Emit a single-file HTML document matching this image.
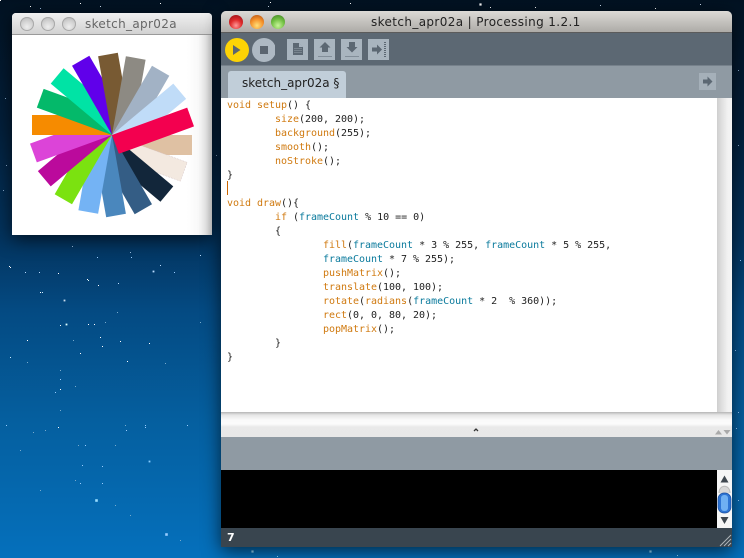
<!DOCTYPE html>
<html>
<head>
<meta charset="utf-8">
<style>
html,body{margin:0;padding:0;width:744px;height:558px;overflow:hidden}
body{position:relative;background:linear-gradient(180deg,#021222 0,#03203c 130px,#03345f 240px,#044a82 310px,#055f9f 420px,#0570bc 558px);font-family:"DejaVu Sans","Liberation Sans",sans-serif}
.a{position:absolute}
.star{position:absolute;left:0;top:0;width:1px;height:1px;background:#fff;box-shadow:
9px 266px #fff,10px 267px #fff,87px 279px #fff,88px 280px #dff,64px 300px 0 .4px #cde,98px 285px #fff,58px 273px #fff,97px 257px #9cf,131px 257px #9cf,174px 272px #9cf,153px 271px 0 .4px #bdf,40px 292px #fff,42px 292px #cef,66px 324px 0 .4px #dff,60px 325px #fff,88px 324px #fff,94px 324px #fff,27px 340px #fff,100px 337px #fff,102px 346px #fff,120px 341px #fff,149px 343px #fff,80px 353px #fff,10px 357px #cef,127px 361px #fff,60px 379px #9cf,60px 389px #fff,55px 392px #9cf,145px 425px #9cf,6px 425px #9cf,58px 427px #fff,145px 427px #9cf,126px 430px #9cf,187px 425px #9cf,85px 445px #9cf,82px 465px #9cf,149px 461px 0 .4px #8cf,96px 500px 0 .8px #9df,166px 534px 0 .8px #9cf,102px 466px #9cf,102px 483px #9cf,80px 483px #9cf,
72px 246px #9bd,130px 252px #9bd,160px 265px #bdf,118px 283px #bdf,174px 272px #bdf,200px 255px #bdf,25px 272px #bdf,39px 272px #bdf,117px 312px #7ac,105px 322px #7ac,73px 340px #7ac,27px 362px #7ac,200px 322px #7ac,165px 363px #7ac,60px 370px #7ac,75px 386px #7ac,60px 410px #7ac,78px 445px #7ac,115px 445px #7ac,125px 425px #7ac,33px 432px #7ac,45px 430px #7ac,20px 450px #7ac,75px 480px #7ac,40px 490px #7ac,115px 505px #7ac,130px 515px #7ac,180px 540px #7ac,
270px 2px #fff,268px 6px #cde,480px 4px 0 .6px #fff,490px 7px #fff,350px 3px #fff,100px 6px #cde,160px 3px #fff,40px 8px #9bd,30px 6px #fff,80px 3px #fff,535px 7px #fff,600px 5px #cde,655px 8px #fff,700px 4px #cde,6px 165px #8ac,5px 98px #8ac,3px 190px #8ac,216px 155px #8ac,738px 70px #8ac,738px 145px #8ac,740px 260px #9cf,738px 412px #9cf,736px 428px #9cf,252px 551px 0 .6px #9df,277px 556px #9df,650px 551px 0 .6px #9df,677px 555px #9df,738px 500px #9cf,735px 350px #9cf;}
.win{box-shadow:0 4px 18px rgba(0,0,0,.65)}
.light{position:absolute;width:14px;height:14px;border-radius:50%}
.g{background:radial-gradient(circle at 50% 70%,#eee 0,#d4d4d4 45%,#b0b0b0 100%);box-shadow:inset 0 0 0 1px #a9a9a9}
.btn{position:absolute;top:39px;width:21px;height:21px;background:#a9b5bf}
#code{position:absolute;left:227px;top:99px;margin:0;font:10px/14px "DejaVu Sans Mono","Liberation Mono",monospace;color:#222;letter-spacing:-.02px;white-space:pre}
#code b{font-weight:normal;color:#d07a10}
#code i{font-style:normal;color:#0a7a9c}
</style>
</head>
<body>
<div class="star"></div>

<!-- sketch window -->
<div class="a win" style="left:12px;top:13px;width:200px;height:222px;background:#fff;border-radius:4px 4px 0 0;overflow:hidden">
  <div class="a" style="left:0;top:0;width:200px;height:21px;background:linear-gradient(#f0f0f0,#d2d2d2);border-bottom:1px solid #9a9a9a"></div>
  <div class="light g" style="left:8px;top:4px"></div>
  <div class="light g" style="left:29px;top:4px"></div>
  <div class="light g" style="left:50px;top:4px"></div>
  <div class="a" style="left:73px;top:3px;font-size:12px;line-height:16px;color:#666;white-space:nowrap;letter-spacing:.33px">sketch_apr02a</div>
  <div class="a" style="left:175px;top:22px;width:25px;height:200px;background:linear-gradient(90deg,rgba(200,200,200,0),rgba(200,200,200,.12) 45%,rgba(190,190,190,.4) 75%,rgba(180,180,180,.75))"></div>
</div>
<svg class="a" style="left:12px;top:35px" width="200" height="200" viewBox="0 0 200 200">
  <g transform="translate(100,100)">
    <rect transform="rotate(0)" width="80" height="20" fill="#dfc1a3"/>
    <rect transform="rotate(20)" width="80" height="20" fill="#f3e9e0" stroke="#d8c8c8" stroke-width=".5" stroke-dasharray="2 1"/>
    <rect transform="rotate(40)" width="80" height="20" fill="#12263a"/>
    <rect transform="rotate(60)" width="80" height="20" fill="#345d85"/>
    <rect transform="rotate(80)" width="80" height="20" fill="#4a87bd"/>
    <rect transform="rotate(100)" width="80" height="20" fill="#74b3f4"/>
    <rect transform="rotate(120)" width="80" height="20" fill="#7be210"/>
    <rect transform="rotate(140)" width="80" height="20" fill="#bb0a9c"/>
    <rect transform="rotate(160)" width="80" height="20" fill="#dc44d8"/>
    <rect transform="rotate(180)" width="80" height="20" fill="#f68b00"/>
    <rect transform="rotate(200)" width="80" height="20" fill="#04b96a"/>
    <rect transform="rotate(220)" width="80" height="20" fill="#00e3a5"/>
    <rect transform="rotate(240)" width="80" height="20" fill="#6000ea"/>
    <rect transform="rotate(260)" width="80" height="20" fill="#785a33"/>
    <rect transform="rotate(280)" width="80" height="20" fill="#8d8a83"/>
    <rect transform="rotate(300)" width="80" height="20" fill="#a2b2c5"/>
    <rect transform="rotate(320)" width="80" height="20" fill="#c0dcf8"/>
    <rect transform="rotate(340)" width="80" height="20" fill="#f3004f"/>
  </g>
</svg>

<!-- main window -->
<div class="a win" style="left:221px;top:11px;width:511px;height:536px;background:#8f9aa3;border-radius:5px 5px 0 0"></div>
<div class="a" style="left:221px;top:11px;width:511px;height:22px;background:linear-gradient(#dcdad6,#adaba7);border-radius:5px 5px 0 0;border-bottom:1px solid #5b5b5b;box-sizing:border-box"></div>
<div class="light" style="left:229px;top:15px;background:radial-gradient(circle at 50% 75%,#ff9a9a 0,#e02b2b 45%,#8e0e14 100%)"></div>
<div class="light" style="left:250px;top:15px;background:radial-gradient(circle at 50% 75%,#ffe07a 0,#f5912a 50%,#ad4c12 100%)"></div>
<div class="light" style="left:271px;top:15px;background:radial-gradient(circle at 50% 75%,#c8f59a 0,#72c043 50%,#3c7d20 100%)"></div>
<div class="a" style="left:371px;top:14px;font-size:12px;line-height:16px;color:#222;white-space:nowrap;letter-spacing:.375px">sketch_apr02a | Processing 1.2.1</div>

<!-- toolbar -->
<div class="a" style="left:221px;top:33px;width:511px;height:32px;background:#5c6873"></div>
<div class="a" style="left:221px;top:65px;width:511px;height:1px;background:#76818b"></div>
<svg class="a" style="left:225px;top:38px" width="50" height="24" viewBox="0 0 50 24">
  <circle cx="12" cy="12" r="12" fill="#fdd305"/>
  <path d="M8 7L15.500 12L8 17Z" fill="#5b6570"/>
  <circle cx="39" cy="12" r="12" fill="#aeb9c3"/>
  <rect x="35" y="8" width="8" height="8" fill="#5b6570"/>
</svg>
<div class="btn" style="left:287px"></div>
<div class="btn" style="left:314px"></div>
<div class="btn" style="left:341px"></div>
<div class="btn" style="left:368px"></div>
<svg class="a" style="left:287px;top:39px" width="102" height="21" viewBox="0 0 102 21">
  <path d="M6 4H12L16 8V16H6Z" fill="#7b8691"/>
  <path d="M6 4H12V8H16V16H6Z" fill="#5c6873"/>
  <path d="M12 4L16 8H12Z" fill="#a9b5bf"/>
  <path d="M7.500 9.500H15M7.500 11.500H15M7.500 13.500H15" stroke="#a9b5bf" stroke-width=".7" stroke-dasharray="1 1"/>
  <path d="M38 3L43.500 8.500H41V13H35V8.500H32.500Z" fill="#5c6873"/>
  <path d="M31.500 17.500H45" stroke="#5c6873" stroke-dasharray="1 1"/>
  <path d="M62 3H68V8H70.500L65 13.500L59.500 8H62Z" fill="#5c6873"/>
  <path d="M58.500 17.500H72" stroke="#5c6873" stroke-dasharray="1 1"/>
  <path d="M85 8.500H90V5.500L95 10.500L90 15.500V12.500H85Z" fill="#5c6873"/>
  <path d="M98 3V18" stroke="#5c6873" stroke-width="2" stroke-dasharray="1 1"/>
</svg>

<!-- tab -->
<div class="a" style="left:228px;top:71px;width:118px;height:27px;background:#c1ced9;border-radius:3px 3px 0 0"></div>
<div class="a" style="left:242px;top:75px;font-size:12px;line-height:16px;color:#222;white-space:nowrap">sketch_apr02a §</div>
<div class="a" style="left:699px;top:73px;width:17px;height:17px;background:#a5b0b9"></div>
<svg class="a" style="left:699px;top:73px" width="17" height="17" viewBox="0 0 17 17">
  <path d="M4 6.500H8.500V3.500L13.500 8.500L8.500 13.500V10.500H4Z" fill="#5c6873"/>
</svg>

<!-- editor -->
<div class="a" style="left:221px;top:98px;width:496px;height:314px;background:#fff"></div>
<div class="a" style="left:717px;top:98px;width:15px;height:314px;background:linear-gradient(90deg,#cfcfcf,#f1f1f1 70%,#f4f4f4)"></div>
<pre id="code"><b>void</b> <b>setup</b>() {
        <b>size</b>(200, 200);
        <b>background</b>(255);
        <b>smooth</b>();
        <b>noStroke</b>();
}

<b>void</b> <b>draw</b>(){
        <b>if</b> (<i>frameCount</i> % 10 == 0)
        {
                <b>fill</b>(<i>frameCount</i> * 3 % 255, <i>frameCount</i> * 5 % 255,
                <i>frameCount</i> * 7 % 255);
                <b>pushMatrix</b>();
                <b>translate</b>(100, 100);
                <b>rotate</b>(<b>radians</b>(<i>frameCount</i> * 2  % 360));
                <b>rect</b>(0, 0, 80, 20);
                <b>popMatrix</b>();
        }
}</pre>
<div class="a" style="left:227px;top:181px;width:1px;height:14px;background:#cc6600"></div>

<!-- divider -->
<div class="a" style="left:221px;top:412px;width:511px;height:25px;background:linear-gradient(#b5b5b5 0,#e6e6e6 3px,#fafafa 8px,#fbfbfb 12px,#e9e9e9 15px,#e8e8e8 25px)"></div>
<svg class="a" style="left:470px;top:426px" width="12" height="8" viewBox="0 0 12 8"><path d="M4 5L6 3L8 5" fill="none" stroke="#333" stroke-width="1.300"/></svg>
<svg class="a" style="left:714px;top:428px" width="18" height="8" viewBox="0 0 18 8"><path d="M1 6.500L4.500 2L8 6.500Z" fill="#aaa"/><path d="M9.500 2H16.500L13 6.500Z" fill="#aaa"/></svg>

<!-- message area + console -->
<div class="a" style="left:221px;top:437px;width:511px;height:33px;background:#8f9aa3"></div>
<div class="a" style="left:221px;top:470px;width:496px;height:58px;background:#000"></div>
<div class="a" style="left:717px;top:470px;width:15px;height:58px;background:#f6f6f6"></div>
<svg class="a" style="left:717px;top:470px" width="15" height="58" viewBox="0 0 15 58">
  <path d="M7.500 5.500L11.500 12.500H3.500Z" fill="#404850"/>
  <path d="M3.500 47H11.500L7.500 54Z" fill="#404850"/>
  <path d="M2 23C2 14 13 14 13 23" fill="#d8d8d8" stroke="#bbb"/>
  <rect x="1" y="23" width="13" height="20" rx="6" fill="#2d74d4" stroke="#1c4f9c" stroke-width=".7"/>
  <rect x="4" y="25" width="7" height="16" rx="3" fill="#6fb0f2"/>
</svg>

<!-- status -->
<div class="a" style="left:221px;top:528px;width:511px;height:19px;background:#39454f"></div>
<div class="a" style="left:227px;top:531px;font:bold 11px/14px 'DejaVu Sans',sans-serif;color:#fff">7</div>
<svg class="a" style="left:719px;top:534px" width="13" height="13" viewBox="0 0 13 13">
  <path d="M1 12L12 1M5 12L12 5M9 12L12 9" stroke="#aeb4b9" stroke-width="1"/>
</svg>
</body>
</html>
